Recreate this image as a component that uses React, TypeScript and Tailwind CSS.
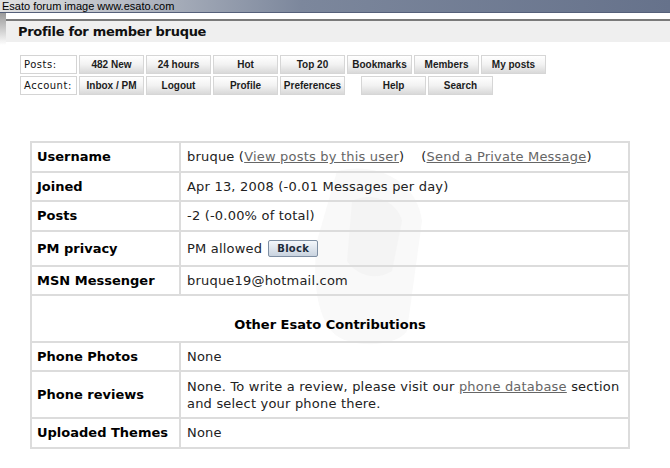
import React from 'react';

const row1 = ['482 New', '24 hours', 'Hot', 'Top 20', 'Bookmarks', 'Members', 'My posts'];
const row2a = ['Inbox / PM', 'Logout', 'Profile', 'Preferences'];
const row2b = ['Help', 'Search'];

function NavLabel({ children }: { children: React.ReactNode }) {
  return (
    <div className="w-[57px] h-[19px] border border-[#d4d4d4] bg-white flex items-center pl-[3px] text-[10px] tracking-[0.5px] text-[#111] font-['DejaVu_Sans',sans-serif]">
      {children}
    </div>
  );
}

function NavButton({ children }: { children: React.ReactNode }) {
  return (
    <div className="w-[65px] h-[19px] border border-[#d6d6d6] bg-gradient-to-b from-white via-[#f2f2f2] to-[#d9d9d9] flex items-center justify-center text-[10px] font-bold text-[#1c1c1c] font-['Liberation_Sans',sans-serif]">
      {children}
    </div>
  );
}

function Row({
  label,
  h,
  children,
}: {
  label: string;
  h: string;
  children: React.ReactNode;
}) {
  return (
    <div className={`flex border-t-2 border-[#dcdcdc] ${h}`}>
      <div className="w-[149px] shrink-0 border-r-2 border-[#dcdcdc] flex items-center pl-[5px] font-bold text-black">
        {label}
      </div>
      <div className="flex-1 flex items-center pl-[6px] pr-2 text-[#222] tracking-[0.2px]">{children}</div>
    </div>
  );
}

export default function App() {
  return (
    <div className="w-[670px] h-[468px] bg-white relative overflow-hidden font-['DejaVu_Sans',sans-serif]">
      {/* window caption */}
      <div className="h-[13px] border-b border-[#55607a] bg-gradient-to-r from-[#e2e2e2] via-[#7c879c] via-45% to-[#66728b] flex items-center pl-[2px] text-[11px] leading-none text-black font-['Liberation_Sans',sans-serif]">
        Esato forum image www.esato.com
      </div>

      <div className="flex">
        <div className="w-[6px] h-[32px] bg-gradient-to-b from-[#9a9a9a] to-white shrink-0" />
        <div className="flex-1 pt-[6px]">
          <div className="border-t-2 border-[#7a7a7a] bg-[#efefef] h-[23px] flex items-center pl-[12px] text-[13px] tracking-[-0.3px] font-bold text-[#111]">
            Profile for member bruque
          </div>
        </div>
      </div>

      {/* navigation */}
      <div className="ml-[20px] mt-[10px] flex flex-col gap-[2px]">
        <div className="flex gap-[2px]">
          <NavLabel>Posts:</NavLabel>
          {row1.map((t) => (
            <NavButton key={t}>{t}</NavButton>
          ))}
        </div>
        <div className="flex gap-[2px]">
          <NavLabel>Account:</NavLabel>
          {row2a.map((t) => (
            <NavButton key={t}>{t}</NavButton>
          ))}
          <div className="w-[12px]" />
          {row2b.map((t) => (
            <NavButton key={t}>{t}</NavButton>
          ))}
        </div>
      </div>

      {/* profile table */}
      <div className="relative ml-[30px] mt-[46px] w-[600px] border-2 border-t-0 border-[#dcdcdc] text-[13px]">
        <svg
          className="absolute left-[265px] top-[20px] pointer-events-none"
          width="140"
          height="190"
          viewBox="0 0 140 190"
          aria-hidden="true"
        >
          <path
            d="M40 10 C80 0 120 20 125 60 L110 170 C100 185 60 188 40 175 C20 160 15 120 20 80 Z"
            fill="#f9f9f9"
          />
          <path d="M55 40 C75 30 100 40 105 60 L95 110 C80 120 60 115 50 100 Z" fill="#f4f4f4" />
        </svg>
        <div className="relative">
          <Row label="Username" h="h-[30px]">
            <span>
              bruque (<span className="underline text-[#666]">View posts by this user</span>)
              <span className="ml-[17px]">
                (<span className="underline text-[#666]">Send a Private Message</span>)
              </span>
            </span>
          </Row>
          <Row label="Joined" h="h-[29px]">
            Apr 13, 2008 (-0.01 Messages per day)
          </Row>
          <Row label="Posts" h="h-[30px]">
            -2 (-0.00% of total)
          </Row>
          <Row label="PM privacy" h="h-[35px]">
            PM allowed
            <span className="ml-[6px] w-[50px] h-[17px] rounded-[2px] border border-[#7f8fa3] bg-gradient-to-b from-[#f4f7fb] to-[#c9d3df] flex items-center justify-center text-[10px] font-bold text-[#1d2b3a] tracking-[0.3px]">
              Block
            </span>
          </Row>
          <Row label="MSN Messenger" h="h-[29px]">
            bruque19@hotmail.com
          </Row>
          <div className="h-[47px] border-t-2 border-[#dcdcdc] flex items-end justify-center pb-[7px] font-bold text-black">
            Other Esato Contributions
          </div>
          <Row label="Phone Photos" h="h-[29px]">
            None
          </Row>
          <Row label="Phone reviews" h="h-[47px]">
            <p className="leading-[17px]">
              None. To write a review, please visit our{' '}
              <span className="underline text-[#666]">phone database</span> section and select your
              phone there.
            </p>
          </Row>
          <Row label="Uploaded Themes" h="h-[30px]">
            None
          </Row>
        </div>
      </div>
    </div>
  );
}
